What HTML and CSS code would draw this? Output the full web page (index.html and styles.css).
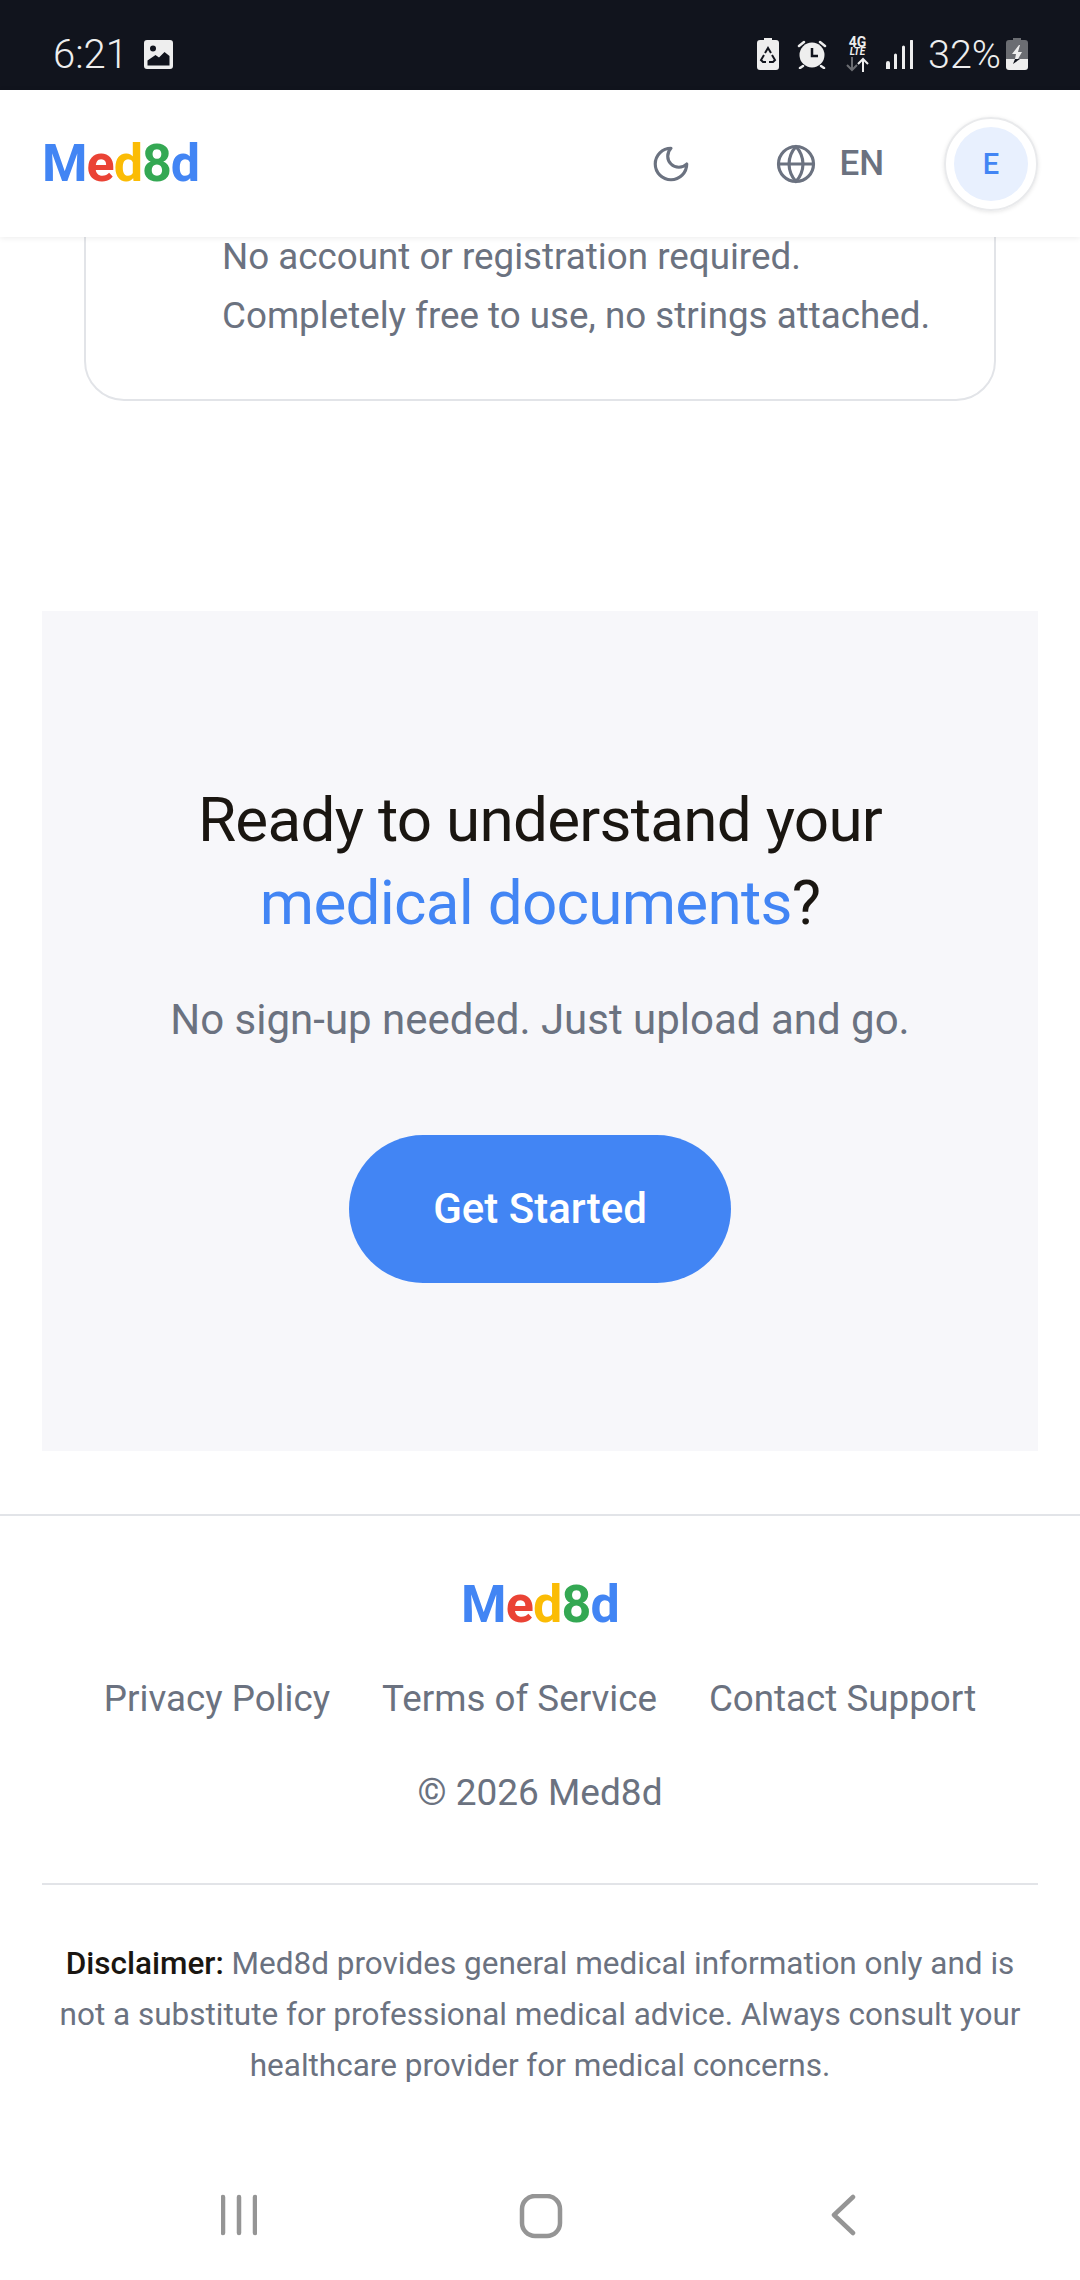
FILE: index.html
```html
<!DOCTYPE html>
<html lang="en">
<head>
    <meta charset="UTF-8">
    <meta name="viewport" content="width=device-width, initial-scale=1.0">
    <title>Med8d</title>
    <link rel="stylesheet" href="styles.css">
</head>
<body>
    <!-- Phone status bar -->
    <div class="status-bar">
        <div class="status-left">
            <span class="status-time">6:21</span>
            <svg width="29" height="29" viewBox="0 0 29 29">
                <path fill="#eee" fill-rule="evenodd" d="M3 0h23a3 3 0 0 1 3 3v23a3 3 0 0 1-3 3H3a3 3 0 0 1-3-3V3a3 3 0 0 1 3-3zM9 5.500a3 3 0 1 0 0 6 3 3 0 0 0 0-6zM3.500 25.500h22V16l-5-4-5.500 5.500-3.500-2.500-8 5.500z"/>
            </svg>
        </div>
        <div class="status-right">
            <svg class="recycle" width="22" height="32" viewBox="0 0 22 32">
                <path fill="#eee" d="M7 0h8v2h4a3 3 0 0 1 3 3v24a3 3 0 0 1-3 3H3a3 3 0 0 1-3-3V5a3 3 0 0 1 3-3h4z"/>
                <path fill="none" stroke="#11141d" stroke-width="2" d="M8 15l3-5 3 5M15 17l3 5-2 2h-4M7 17l-3 5 2 2h3"/>
            </svg>
            <svg class="alarm" width="30" height="29" viewBox="0 0 30 29">
                <circle cx="15" cy="15" r="12.500" fill="#eee"/>
                <path fill="none" stroke="#11141d" stroke-width="2.500" d="M15 8v8h6"/>
                <path fill="none" stroke="#eee" stroke-width="2.500" stroke-linecap="round" d="M2 6l5-4M28 6l-5-4M6 26l-3 2M24 26l3 2"/>
            </svg>
            <div class="net-type">
                <span class="net-4g">4G</span>
                <span class="net-lte">LTE</span>
                <svg width="23" height="15" viewBox="0 0 23 15">
                    <path fill="none" stroke="#6b6d72" stroke-width="2" d="M6 0v13M1 8l5 5 5-5"/>
                    <path fill="none" stroke="#eee" stroke-width="2" d="M17 15V2M12 7l5-5 5 5"/>
                </svg>
            </div>
            <svg class="signal" width="28" height="29" viewBox="0 0 28 29">
                <path fill="#eee" d="M0 23a2 2 0 0 1 4 0v6H0zM8 15a1.500 1.500 0 0 1 3 0v14H8zM16 7a1.500 1.500 0 0 1 3 0v22h-3zM24 1a1.500 1.500 0 0 1 3 0v28h-3z"/>
            </svg>
            <span class="status-pct">32%</span>
            <svg class="status-batt" width="22" height="32" viewBox="0 0 22 32">
                <path fill="#6b6d72" d="M7 0h8v2h4a3 3 0 0 1 3 3v16H0V5a3 3 0 0 1 3-3h4z"/>
                <path fill="#eee" d="M0 21h22v8a3 3 0 0 1-3 3H3a3 3 0 0 1-3-3z"/>
                <path fill="#eee" d="M13 7l-7 9h4l-1 5h3l4-7h-4l2-7z"/>
                <path fill="#11141d" d="M9 21l-2 5 7-5z"/>
            </svg>
        </div>
    </div>

    <header class="site-header">
        <div class="logo logo-header"><span class="c-blue">M</span><span class="c-red">e</span><span class="c-yellow">d</span><span class="c-green">8</span><span class="c-blue">d</span></div>
        <div class="header-actions">
            <svg class="moon" width="42" height="42" viewBox="0 0 24 24" fill="none" stroke="#6b7280" stroke-width="1.800" stroke-linecap="round" stroke-linejoin="round">
                <path d="M12 3a6 6 0 0 0 9 9 9 9 0 1 1-9-9z"/>
            </svg>
            <div class="lang">
                <svg width="42" height="42" viewBox="0 0 24 24" fill="none" stroke="#6b7280" stroke-width="1.800" stroke-linecap="round" stroke-linejoin="round">
                    <circle cx="12" cy="12" r="10"/>
                    <path d="M2 12h20"/>
                    <path d="M12 2a15.300 15.300 0 0 1 4 10 15.300 15.300 0 0 1-4 10 15.300 15.300 0 0 1-4-10 15.300 15.300 0 0 1 4-10z"/>
                </svg>
                <span>EN</span>
            </div>
            <div class="avatar-ring"><div class="avatar">E</div></div>
        </div>
    </header>

    <main class="content">
        <div class="feature-card">
            <p>No account or registration required.</p>
            <p>Completely free to use, no strings attached.</p>
        </div>

        <section class="cta">
            <h2>Ready to understand your<br><span class="c-blue">medical documents</span>?</h2>
            <p>No sign-up needed. Just upload and go.</p>
            <a class="cta-button" href="#">Get Started</a>
        </section>
    </main>

    <footer class="site-footer">
        <div class="logo logo-footer"><span class="c-blue">M</span><span class="c-red">e</span><span class="c-yellow">d</span><span class="c-green">8</span><span class="c-blue">d</span></div>
        <div class="footer-links">
            <a href="#">Privacy Policy</a>
            <a href="#">Terms of Service</a>
            <a href="#">Contact Support</a>
        </div>
        <div class="copyright">© 2026 Med8d</div>
        <p class="disclaimer"><strong>Disclaimer:</strong> Med8d provides general medical information only and is not a substitute for professional medical advice. Always consult your healthcare provider for medical concerns.</p>
    </footer>

    <!-- Phone navigation bar -->
    <div class="nav-bar">
        <svg width="36" height="42" viewBox="0 0 36 42" fill="none" stroke="#959595" stroke-width="4.500" stroke-linecap="round">
            <path d="M2 3v36M18 3v36M34 3v36"/>
        </svg>
        <svg class="nav-home" width="44" height="46" viewBox="0 0 44 46" fill="none" stroke="#959595" stroke-width="4.500">
            <rect x="3" y="2" width="38" height="40" rx="13"/>
        </svg>
        <svg class="nav-back" width="25" height="42" viewBox="0 0 25 42" fill="none" stroke="#959595" stroke-width="4.500" stroke-linecap="round" stroke-linejoin="round">
            <path d="M22 3L3 21l19 18"/>
        </svg>
    </div>
</body>
</html>
```

FILE: styles.css
```css
* {
    box-sizing: border-box;
}
body {
    font-family: Roboto, sans-serif;
    background-color: white;
    margin: 0;
    padding: 0;
    width: 1080px;
    height: 2280px;
    overflow: hidden;
    color: #6b7280;
}
p {
    margin: 0;
}
a {
    color: inherit;
    text-decoration: none;
}
.c-blue { color: #4285f4; }
.c-red { color: #ea4335; }
.c-yellow { color: #fbbc05; }
.c-green { color: #34a853; }

.status-bar {
    height: 90px;
    background: #11141d;
    display: flex;
    justify-content: space-between;
    align-items: center;
    padding: 18px 52px 0 53px;
    color: #eee;
}
.status-left {
    display: flex;
    align-items: center;
    gap: 16px;
}
.status-time {
    font-size: 40px;
    font-weight: 300;
}
.status-right {
    display: flex;
    align-items: center;
    gap: 14px;
}
.status-pct {
    font-size: 39.5px;
    font-weight: 300;
}
.status-batt {
    margin-left: -9px;
}
.recycle {
    margin-right: 1px;
}
.alarm {
    margin: 0 5px 0 3px;
}
.net-type {
    width: 23px;
    margin-right: 3px;
    display: flex;
    flex-direction: column;
    align-items: center;
    font-weight: 700;
    line-height: 1;
}
.net-4g {
    font-size: 14px;
    height: 11px;
    line-height: 11px;
}
.net-lte {
    font-size: 10px;
    height: 8px;
    line-height: 8px;
    font-style: italic;
    margin-bottom: 1px;
}

.site-header {
    height: 147px;
    display: flex;
    justify-content: space-between;
    align-items: center;
    padding: 0 42px;
    background: white;
    box-shadow: 0 1px 6px rgba(0, 0, 0, 0.08);
    position: relative;
    z-index: 2;
}
.logo {
    font-weight: 700;
}
.logo-header {
    font-size: 52px;
    letter-spacing: -1px;
}
.header-actions {
    display: flex;
    align-items: center;
}
.moon {
    margin-right: 83px;
}
.lang {
    display: flex;
    align-items: center;
    gap: 22px;
    font-size: 35px;
    font-weight: 500;
    margin-right: 60px;
}
.avatar-ring {
    width: 94px;
    height: 94px;
    border-radius: 50%;
    border: 2px solid #e9eaec;
    box-shadow: 0 1px 4px rgba(0, 0, 0, 0.1);
    display: flex;
    align-items: center;
    justify-content: center;
}
.avatar {
    width: 74px;
    height: 74px;
    border-radius: 50%;
    background: #e8f0fe;
    color: #4285f4;
    font-size: 29px;
    font-weight: 500;
    display: flex;
    align-items: center;
    justify-content: center;
}

.content {
    padding: 0 42px;
}
.feature-card {
    margin: -60px 42px 0;
    height: 224px;
    border: 2px solid #e2e4e8;
    border-radius: 40px;
    padding: 48px 0 0 136px;
    font-size: 36.75px;
    line-height: 59px;
}
.cta {
    margin-top: 210px;
    height: 840px;
    background: #f7f7fa;
    text-align: center;
    padding-top: 167px;
}
.cta h2 {
    margin: 0;
    font-size: 62px;
    font-weight: 400;
    letter-spacing: -0.75px;
    line-height: 83px;
    color: #1a1611;
}
.cta p {
    font-size: 42px;
    margin-top: 51px;
    line-height: 50px;
}
.cta-button {
    display: inline-block;
    width: 382px;
    height: 148px;
    margin-top: 90px;
    border-radius: 74px;
    background: #4285f4;
    color: white;
    font-size: 42px;
    font-weight: 500;
    line-height: 148px;
}

.site-footer {
    margin-top: 63px;
    border-top: 2px solid #e2e4e8;
    padding: 0 42px;
    text-align: center;
}
.logo-footer {
    font-size: 52px;
    letter-spacing: -0.8px;
    margin-top: 59px;
    line-height: 60px;
}
.footer-links {
    display: flex;
    justify-content: center;
    gap: 52px;
    margin-top: 39px;
    font-size: 36.75px;
    line-height: 50px;
}
.copyright {
    font-size: 37px;
    line-height: 50px;
    margin-top: 44px;
}
.disclaimer {
    margin-top: 65px;
    border-top: 2px solid #e2e4e8;
    padding: 53px 12px 0;
    font-size: 31.5px;
    line-height: 51px;
}
.disclaimer strong {
    color: #1a1611;
    font-weight: 500;
}

.nav-bar {
    position: absolute;
    left: 0;
    top: 2194px;
    width: 1080px;
    display: flex;
    padding-left: 221px;
}
.nav-home {
    margin-left: 262px;
}
.nav-back {
    margin-left: 268px;
}
```
